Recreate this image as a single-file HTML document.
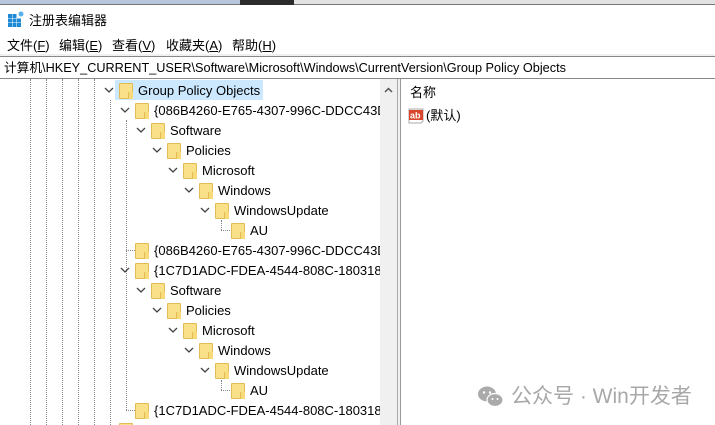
<!DOCTYPE html>
<html><head><meta charset="utf-8"><style>
*{margin:0;padding:0;box-sizing:border-box}
body{width:715px;height:425px;overflow:hidden;background:#fff;position:relative;font-family:"Liberation Sans","Noto Sans CJK SC",sans-serif;font-size:13px;color:#000}
.a{position:absolute}
.f{position:absolute;width:14px;height:16px;background:#fbe08a;border:1px solid #e2bd55;border-radius:1px}
.f:after{content:"";position:absolute;right:-1px;bottom:-1px;width:4px;height:7px;border-left:1px solid #e2bd55;background:#f9da78}
.t{position:absolute;line-height:20px;white-space:nowrap;font-size:13px;margin-top:1px}
.c{position:absolute;width:10px;height:6px}
.vl{position:absolute;width:0;border-left:1px dotted #888}
.hl{position:absolute;height:0;border-top:1px dotted #888}
</style></head><body>
<div class="a" style="left:0;top:0;width:240px;height:5px;background:#b7c6dc;border-bottom:1px solid #777"></div>
<div class="a" style="left:240px;top:0;width:54px;height:5px;background:#2b2b2b"></div>
<div class="a" style="left:294px;top:0;width:421px;height:5px;background:#e2e2e2;border-bottom:1px solid #777"></div>
<svg class="a" style="left:8px;top:11px" width="16" height="16" viewBox="0 0 16 16"><g fill="#1e8ad6"><rect x="0" y="3" width="4" height="4"/><rect x="4.5" y="3" width="4" height="4"/><rect x="0" y="7.5" width="4" height="4"/><rect x="4.5" y="7.5" width="4" height="4"/><rect x="9" y="7.5" width="4" height="4"/><rect x="0" y="12" width="4" height="4"/><rect x="4.5" y="12" width="4" height="4"/><rect x="9" y="12" width="4" height="4"/></g><circle cx="13" cy="3" r="2.5" fill="#5ab0e8"/></svg>
<div class="t" style="left:29px;top:10px">注册表编辑器</div>
<div class="t" style="left:7px;top:35px">文件(<u>F</u>)</div>
<div class="t" style="left:59px;top:35px">编辑(<u>E</u>)</div>
<div class="t" style="left:112px;top:35px">查看(<u>V</u>)</div>
<div class="t" style="left:166px;top:35px">收藏夹(<u>A</u>)</div>
<div class="t" style="left:232px;top:35px">帮助(<u>H</u>)</div>
<div class="a" style="left:0;top:54px;width:715px;height:3px;background:#f0f0f0"></div>
<div class="a" style="left:0;top:56px;width:715px;height:1px;background:#888"></div>
<div class="t" style="left:4px;top:57px;font-size:12.7px">计算机\HKEY_CURRENT_USER\Software\Microsoft\Windows\CurrentVersion\Group Policy Objects</div>
<div class="a" style="left:0;top:78px;width:715px;height:1px;background:#888"></div>

<div class="a" style="left:0;top:79px;width:380px;height:346px;overflow:hidden">
<div style="position:absolute;left:0;top:-79px;width:380px;height:425px">
<div class="vl" style="left:30px;top:79px;height:346px"></div>
<div class="vl" style="left:46px;top:79px;height:346px"></div>
<div class="vl" style="left:62px;top:79px;height:346px"></div>
<div class="vl" style="left:78px;top:79px;height:346px"></div>
<div class="vl" style="left:94px;top:79px;height:346px"></div>
<div class="vl" style="left:110px;top:100px;height:325px"></div>
<div class="vl" style="left:126px;top:120px;height:290px"></div>
<div class="hl" style="left:126px;top:250px;width:9px"></div>
<div class="hl" style="left:126px;top:410px;width:9px"></div>
<div class="vl" style="left:221px;top:220px;height:10px"></div>
<div class="hl" style="left:221px;top:230px;width:9px"></div>
<div class="vl" style="left:221px;top:380px;height:10px"></div>
<div class="hl" style="left:221px;top:390px;width:9px"></div>
<div class="a" style="left:115px;top:80px;width:148px;height:20px;background:#cce8ff"></div>

<svg class="c" style="left:104px;top:87px" viewBox="0 0 10 6"><path d="M1 1L5 5L9 1" fill="none" stroke="#444" stroke-width="1.3"/></svg><div class="f" style="left:119px;top:83px"></div><div class="t" style="left:138px;top:80px">Group Policy Objects</div>
<svg class="c" style="left:120px;top:107px" viewBox="0 0 10 6"><path d="M1 1L5 5L9 1" fill="none" stroke="#444" stroke-width="1.3"/></svg><div class="f" style="left:135px;top:103px"></div><div class="t" style="left:154px;top:100px">{086B4260-E765-4307-996C-DDCC43D7</div>
<svg class="c" style="left:136px;top:127px" viewBox="0 0 10 6"><path d="M1 1L5 5L9 1" fill="none" stroke="#444" stroke-width="1.3"/></svg><div class="f" style="left:151px;top:123px"></div><div class="t" style="left:170px;top:120px">Software</div>
<svg class="c" style="left:152px;top:147px" viewBox="0 0 10 6"><path d="M1 1L5 5L9 1" fill="none" stroke="#444" stroke-width="1.3"/></svg><div class="f" style="left:167px;top:143px"></div><div class="t" style="left:186px;top:140px">Policies</div>
<svg class="c" style="left:168px;top:167px" viewBox="0 0 10 6"><path d="M1 1L5 5L9 1" fill="none" stroke="#444" stroke-width="1.3"/></svg><div class="f" style="left:183px;top:163px"></div><div class="t" style="left:202px;top:160px">Microsoft</div>
<svg class="c" style="left:184px;top:187px" viewBox="0 0 10 6"><path d="M1 1L5 5L9 1" fill="none" stroke="#444" stroke-width="1.3"/></svg><div class="f" style="left:199px;top:183px"></div><div class="t" style="left:218px;top:180px">Windows</div>
<svg class="c" style="left:200px;top:207px" viewBox="0 0 10 6"><path d="M1 1L5 5L9 1" fill="none" stroke="#444" stroke-width="1.3"/></svg><div class="f" style="left:215px;top:203px"></div><div class="t" style="left:234px;top:200px">WindowsUpdate</div>
<div class="f" style="left:231px;top:223px"></div><div class="t" style="left:250px;top:220px">AU</div>
<div class="f" style="left:135px;top:243px"></div><div class="t" style="left:154px;top:240px">{086B4260-E765-4307-996C-DDCC43D7</div>
<svg class="c" style="left:120px;top:267px" viewBox="0 0 10 6"><path d="M1 1L5 5L9 1" fill="none" stroke="#444" stroke-width="1.3"/></svg><div class="f" style="left:135px;top:263px"></div><div class="t" style="left:154px;top:260px">{1C7D1ADC-FDEA-4544-808C-18031830</div>
<svg class="c" style="left:136px;top:287px" viewBox="0 0 10 6"><path d="M1 1L5 5L9 1" fill="none" stroke="#444" stroke-width="1.3"/></svg><div class="f" style="left:151px;top:283px"></div><div class="t" style="left:170px;top:280px">Software</div>
<svg class="c" style="left:152px;top:307px" viewBox="0 0 10 6"><path d="M1 1L5 5L9 1" fill="none" stroke="#444" stroke-width="1.3"/></svg><div class="f" style="left:167px;top:303px"></div><div class="t" style="left:186px;top:300px">Policies</div>
<svg class="c" style="left:168px;top:327px" viewBox="0 0 10 6"><path d="M1 1L5 5L9 1" fill="none" stroke="#444" stroke-width="1.3"/></svg><div class="f" style="left:183px;top:323px"></div><div class="t" style="left:202px;top:320px">Microsoft</div>
<svg class="c" style="left:184px;top:347px" viewBox="0 0 10 6"><path d="M1 1L5 5L9 1" fill="none" stroke="#444" stroke-width="1.3"/></svg><div class="f" style="left:199px;top:343px"></div><div class="t" style="left:218px;top:340px">Windows</div>
<svg class="c" style="left:200px;top:367px" viewBox="0 0 10 6"><path d="M1 1L5 5L9 1" fill="none" stroke="#444" stroke-width="1.3"/></svg><div class="f" style="left:215px;top:363px"></div><div class="t" style="left:234px;top:360px">WindowsUpdate</div>
<div class="f" style="left:231px;top:383px"></div><div class="t" style="left:250px;top:380px">AU</div>
<div class="f" style="left:135px;top:403px"></div><div class="t" style="left:154px;top:400px">{1C7D1ADC-FDEA-4544-808C-18031830</div>
<div class="f" style="left:119px;top:423px"></div>
</div></div>

<div class="a" style="left:380px;top:79px;width:17px;height:346px;background:#f0f0f0"></div>
<svg class="a" style="left:384px;top:87px" width="9" height="6" viewBox="0 0 9 6"><path d="M1 5L4.5 1.5L8 5" fill="none" stroke="#555" stroke-width="1.5"/></svg>
<div class="a" style="left:397px;top:79px;width:1px;height:346px;background:#aaa"></div>
<div class="a" style="left:398px;top:79px;width:2px;height:346px;background:#f0f0f0"></div>
<div class="a" style="left:400px;top:79px;width:1px;height:346px;background:#999"></div>
<div class="t" style="left:410px;top:82px">名称</div>
<svg class="a" style="left:408px;top:108px" width="16" height="16" viewBox="0 0 16 16"><path d="M1 1H15V13L13 15H1Z" fill="#fff" stroke="#aaa"/><rect x="1" y="2" width="14" height="10" fill="#d9462c"/><text x="2" y="10.5" font-size="9" font-weight="bold" fill="#fff" font-family="Liberation Sans">ab</text></svg>
<div class="t" style="left:426px;top:105px">(默认)</div>

<svg class="a" style="left:477px;top:385px" width="28" height="24" viewBox="0 0 28 24"><ellipse cx="10" cy="9" rx="9" ry="7.5" fill="#aaa"/><ellipse cx="18" cy="15" rx="8" ry="6.5" fill="#aaa" stroke="#fff" stroke-width="1.2"/><circle cx="7" cy="7.5" r="1.2" fill="#fff"/><circle cx="13" cy="7.5" r="1.2" fill="#fff"/><circle cx="15.5" cy="14" r="1" fill="#fff"/><circle cx="20.5" cy="14" r="1" fill="#fff"/></svg>
<div class="t" style="left:511px;top:383px;font-size:21px;line-height:26px;color:#a8a8a8">公众号 · Win开发者</div>
</body></html>
